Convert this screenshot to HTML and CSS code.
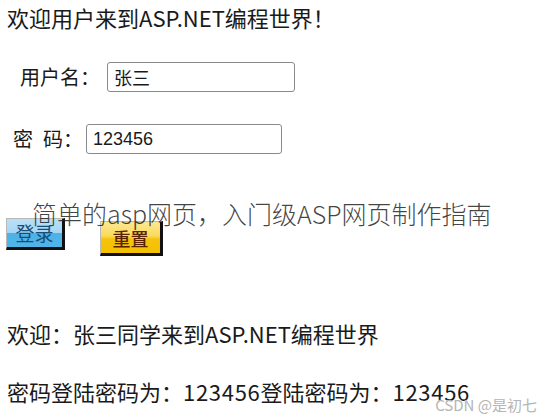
FILE: index.html
```html
<!DOCTYPE html>
<html lang="zh-CN">
<head>
<meta charset="utf-8">
<title>ASP.NET</title>
<link rel="stylesheet" href="styles.css">
</head>
<body>
<div class="page">
  <h1 class="title">欢迎用户来到ASP.NET编程世界！</h1>
  <div class="row row-user">
    <label class="label">用户名：</label>
    <input class="field field-user" type="text" value="张三">
  </div>
  <div class="row row-pass">
    <label class="label">密<span class="sp"></span>码：</label>
    <input class="field field-pass" type="text" value="123456">
  </div>
  <div class="buttons">
    <button class="btn btn-login" type="button">登录</button>
    <button class="btn btn-reset" type="button">重置</button>
  </div>
  <p class="result result-1">欢迎：张三同学来到ASP.NET编程世界</p>
  <p class="result result-2">密码登陆密码为：<span class="num">123456</span>登陆密码为：<span class="num">123456</span></p>
</div>
<div class="overlay-title">简单的asp网页，入门级ASP网页制作指南</div>
<div class="watermark">CSDN @是初七</div>
</body>
</html>
```
FILE: styles.css
```css
html, body {
  margin: 0;
  padding: 0;
  background: #ffffff;
}
body {
  width: 540px;
  height: 416px;
  overflow: hidden;
  position: relative;
  font-family: "Noto Sans CJK SC", "Noto Sans", sans-serif;
  color: #1a1a1a;
}
.page {
  padding: 2px 0 0 7px;
  display: flex;
  flex-direction: column;
}
.title {
  margin: 0;
  font-size: 22px;
  font-weight: 400;
  line-height: 30px;
}
.row {
  display: flex;
  align-items: center;
}
.row-user {
  margin: 30px 0 0 13px;
}
.row-pass {
  margin: 32px 0 0 6px;
}
.label {
  font-size: 20px;
  line-height: 30px;
  margin-right: 7px;
}
.row-pass .label {
  margin-right: 3px;
}
.sp {
  display: inline-block;
  width: 10px;
}
.field {
  box-sizing: border-box;
  height: 30px;
  border: 1px solid #8a8a8a;
  border-radius: 3px;
  padding: 0 6px;
  font-family: "Liberation Sans", "Noto Sans CJK SC", sans-serif;
  font-size: 18px;
  color: #1a1a1a;
  background: #fff;
}
.field-user {
  width: 188px;
}
.field-pass {
  width: 196px;
}
.buttons {
  display: flex;
  align-items: flex-start;
  gap: 35px;
  margin: 64px 0 0 -1px;
}
.btn {
  box-sizing: border-box;
  font-family: "Noto Sans CJK SC", sans-serif;
  font-size: 19px;
  line-height: 24px;
  padding: 0;
  border-style: solid;
  border-width: 1px 3px 3px 1px;
  border-color: #b8b8b8 #111 #111 #b8b8b8;
}
.btn-login {
  width: 59px;
  height: 32px;
  color: #174d76;
  background: linear-gradient(#b9e0f6 0%, #a6d6f3 50%, #4db3e6 50%, #4fb5e8 100%);
}
.btn-reset {
  width: 63px;
  height: 35px;
  margin-top: 3px;
  color: #5a2300;
  font-weight: 500;
  font-size: 18px;
  background: linear-gradient(#fde893 0%, #fbd95a 45%, #f5c40a 55%, #f4c000 100%);
}
.result {
  margin: 0;
  font-size: 22px;
  line-height: 30px;
}
.num {
  letter-spacing: 0.7px;
}
.result-1 {
  margin-top: 62px;
}
.result-2 {
  margin-top: 28px;
}
.overlay-title {
  position: absolute;
  left: 32px;
  top: 195px;
  font-size: 25px;
  font-weight: 300;
  line-height: 36px;
  color: rgba(35, 35, 35, 0.85);
  white-space: nowrap;
}
.watermark {
  position: absolute;
  right: 3px;
  bottom: 2px;
  font-size: 15px;
  line-height: 18px;
  color: #b5b5b5;
  text-shadow: 0 0 1px #fff;
  white-space: nowrap;
}
```
